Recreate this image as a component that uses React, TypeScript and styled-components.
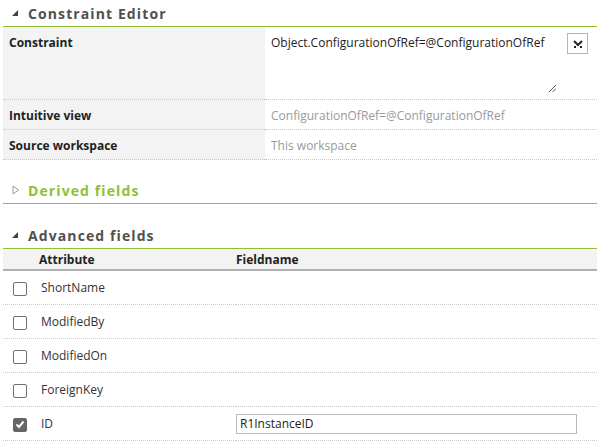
import { createGlobalStyle, styled } from "styled-components"

const GlobalStyle = createGlobalStyle`
  body {
    margin: 0;
    background: #fff;
    font-family: "Open Sans", "Liberation Sans", sans-serif;
    font-size: 12px;
    color: #222;
  }
`

const Page = styled.div`
  padding: 0 3px;
`

const Section = styled.section<{ $gap?: number }>`
  margin-top: ${(p) => p.$gap ?? 0}px;
`

const SectionHeader = styled.div<{ $open?: boolean }>`
  display: flex;
  align-items: center;
  height: 26px;
  padding-left: 9px;
  border-bottom: 1px solid #8fbf33;
  color: ${(p) => (p.$open ? "#505050" : "#8fbf33")};
`

const Arrow = styled.span`
  display: inline-flex;
  width: 16px;
`

const HeaderTitle = styled.span`
  font-weight: 700;
  font-size: 14px;
  letter-spacing: 1.1px;
`

const PropTable = styled.div`
  display: grid;
  grid-template-columns: 262px 1fr;
`

const Label = styled.div<{ $h: number }>`
  height: ${(p) => p.$h}px;
  background: #f3f3f3;
  font-weight: 700;
  padding: 7px 6px 0;
  box-sizing: border-box;
  border-bottom: 1px dotted #c8c8c8;
`

const Value = styled.div<{ $h: number; $muted?: boolean }>`
  position: relative;
  height: ${(p) => p.$h}px;
  padding: 7px 6px 0;
  box-sizing: border-box;
  color: ${(p) => (p.$muted ? "#9a9a9a" : "#222")};
  border-bottom: 1px dotted #c8c8c8;
`

const ExprBox = styled.div`
  display: flex;
  align-items: flex-start;
  justify-content: space-between;
`

const Resize = styled.svg`
  position: absolute;
  right: 41px;
  bottom: 7px;
`

const SelectButton = styled.div`
  width: 19px;
  height: 19px;
  margin-top: -1px;
  margin-right: 3px;
  border: 1px solid #b5b5b5;
  display: flex;
  align-items: center;
  justify-content: center;
  background: #fff;
`

const FieldTable = styled.div`
  display: grid;
  grid-template-columns: 233px 1fr;
`

const HeadCell = styled.div<{ $pad: number }>`
  height: 22px;
  background: #f3f3f3;
  border-bottom: 2px solid #b0b0b0;
  font-weight: 700;
  padding-left: ${(p) => p.$pad}px;
  display: flex;
  align-items: center;
  box-sizing: border-box;
  padding-top: 1px;
`

const Cell = styled.div`
  height: 34px;
  display: flex;
  align-items: center;
  border-bottom: 1px dotted #c8c8c8;
  box-sizing: border-box;
`

const Check = styled.span<{ $on?: boolean }>`
  width: 12px;
  height: 12px;
  margin: 2px 14px 0 10px;
  border-radius: 2px;
  border: 1px solid ${(p) => (p.$on ? "#666" : "#707070")};
  background: ${(p) => (p.$on ? "#666" : "#fff")};
  display: flex;
  align-items: center;
  justify-content: center;
`

const AttrName = styled.span`
  color: #333;
`

const TextInput = styled.div`
  width: 341px;
  height: 20px;
  border: 1px solid #b8b8b8;
  box-sizing: border-box;
  display: flex;
  align-items: center;
  padding-left: 3px;
  color: #222;
`

const fields = [
  { name: "ShortName" },
  { name: "ModifiedBy" },
  { name: "ModifiedOn" },
  { name: "ForeignKey" },
  { name: "ID", checked: true, value: "R1InstanceID" },
]

function OpenArrow() {
  return (
    <Arrow>
      <svg width="6" height="6" viewBox="0 0 6 6">
        <polygon points="6,0 6,6 0,6" fill="#444" />
      </svg>
    </Arrow>
  )
}

function ClosedArrow() {
  return (
    <Arrow>
      <svg width="8" height="10" viewBox="0 0 8 10">
        <polygon points="1,1 6.5,5 1,9" fill="none" stroke="#999" strokeWidth="1" />
      </svg>
    </Arrow>
  )
}

export default function App() {
  return (
    <Page>
      <GlobalStyle />
      <Section>
        <SectionHeader $open>
          <OpenArrow />
          <HeaderTitle>Constraint Editor</HeaderTitle>
        </SectionHeader>
        <PropTable>
          <Label $h={73}>Constraint</Label>
          <Value $h={73}>
            <ExprBox>
              <span>Object.ConfigurationOfRef=@ConfigurationOfRef</span>
              <SelectButton>
                <svg width="10" height="8" viewBox="0 0 10 8">
                  <path d="M1 1 L5 5 L9 1" fill="none" stroke="#222" strokeWidth="2" />
                  <rect x="1" y="6" width="2" height="2" fill="#222" />
                  <rect x="7" y="6" width="2" height="2" fill="#222" />
                </svg>
              </SelectButton>
            </ExprBox>
            <Resize width="7" height="7" viewBox="0 0 7 7">
              <path d="M0 7 L7 0 M3.5 7 L7 3.5" stroke="#555" strokeWidth="1" />
            </Resize>
          </Value>
          <Label $h={30}>Intuitive view</Label>
          <Value $h={30} $muted>
            ConfigurationOfRef=@ConfigurationOfRef
          </Value>
          <Label $h={30}>Source workspace</Label>
          <Value $h={30} $muted>
            This workspace
          </Value>
        </PropTable>
      </Section>

      <Section $gap={17}>
        <SectionHeader>
          <ClosedArrow />
          <HeaderTitle>Derived fields</HeaderTitle>
        </SectionHeader>
      </Section>

      <Section $gap={18}>
        <SectionHeader $open>
          <OpenArrow />
          <HeaderTitle>Advanced fields</HeaderTitle>
        </SectionHeader>
        <FieldTable>
          <HeadCell $pad={36}>Attribute</HeadCell>
          <HeadCell $pad={0}>Fieldname</HeadCell>
          {fields.map((f) => (
            <>
              <Cell key={f.name + "a"}>
                <Check $on={f.checked}>
                  {f.checked && (
                    <svg width="10" height="9" viewBox="0 0 10 9">
                      <path d="M1.5 4.5 L4 7 L8.5 1.5" fill="none" stroke="#fff" strokeWidth="2" />
                    </svg>
                  )}
                </Check>
                <AttrName>{f.name}</AttrName>
              </Cell>
              <Cell key={f.name + "b"}>
                {f.value && <TextInput>{f.value}</TextInput>}
              </Cell>
            </>
          ))}
        </FieldTable>
      </Section>
    </Page>
  )
}
